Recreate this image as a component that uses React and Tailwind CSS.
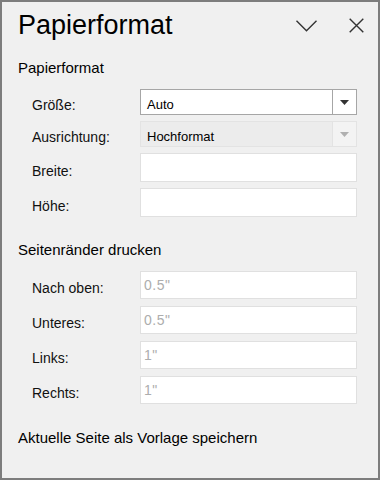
import React from "react";

const font = { fontFamily: '"Liberation Sans", Arial, sans-serif' };

function Label({ children }) {
  return (
    <div className="w-[122px] shrink-0 pl-[14px] pt-[6px] text-[14px] leading-[16px] text-[#111]">
      {children}
    </div>
  );
}

function Select({ value, disabled }) {
  return (
    <div
      className={`flex h-[26px] w-[217px] border ${
        disabled ? "border-[#e3e3e3] bg-[#ececec]" : "border-[#a6a6a6] bg-white"
      }`}
    >
      <div className="flex flex-1 items-center pl-[6px] pt-[5px] text-[13px] leading-[15px] text-black">
        {value}
      </div>
      <div
        className={`flex w-[24px] items-center justify-center border-l ${
          disabled ? "border-[#e3e3e3] bg-[#f3f3f3]" : "border-[#a6a6a6] bg-white"
        }`}
      >
        <svg width="9" height="5" viewBox="0 0 9 5">
          <path d="M0 0h9L4.5 5z" fill={disabled ? "#b0b0b0" : "#333"} />
        </svg>
      </div>
    </div>
  );
}

function Input({ placeholder, h = "h-[29px]" }) {
  return (
    <div
      className={`flex ${h} w-[217px] items-center border border-[#e0e0e0] bg-white pl-[3px] text-[14px] leading-[16px] tracking-[0.5px] text-[#adadad]`}
    >
      {placeholder}
    </div>
  );
}

function Row({ label, children, className = "" }) {
  return (
    <div className={`flex items-center ${className}`}>
      <Label>{label}</Label>
      {children}
    </div>
  );
}

export default function App() {
  return (
    <div
      className="flex h-[480px] w-[380px] flex-col border-2 border-[#7d7d7d] bg-[#f0f0f0] pl-[16px] pr-[21px] pt-[8px]"
      style={font}
    >
      <div className="flex h-[31px] items-center justify-between">
        <div className="text-[27px] leading-[31px] text-black">Papierformat</div>
        <div className="-mr-[7px] flex items-center gap-[32px]">
          <svg width="21" height="12" viewBox="0 0 21 12">
            <path d="M0.5 0.7L10.5 10.7L20.5 0.7" fill="none" stroke="#333" strokeWidth="1.4" />
          </svg>
          <svg width="15" height="15" viewBox="0 0 15 15">
            <path d="M0.7 0.7L14.3 14.3M14.3 0.7L0.7 14.3" fill="none" stroke="#333" strokeWidth="1.4" />
          </svg>
        </div>
      </div>

      <div className="mt-[18px] text-[15px] leading-[17px] text-black">Papierformat</div>

      <Row label="Größe:" className="mt-[13px]">
        <Select value="Auto" />
      </Row>
      <Row label="Ausrichtung:" className="mt-[6px]">
        <Select value="Hochformat" disabled />
      </Row>
      <Row label="Breite:" className="mt-[6px]">
        <Input />
      </Row>
      <Row label="Höhe:" className="mt-[6px]">
        <Input />
      </Row>

      <div className="mt-[24px] text-[15px] leading-[17px] text-black">Seitenränder drucken</div>

      <Row label="Nach oben:" className="mt-[13px]">
        <Input placeholder={'0.5"'} h="h-[28px]" />
      </Row>
      <Row label="Unteres:" className="mt-[7px]">
        <Input placeholder={'0.5"'} h="h-[28px]" />
      </Row>
      <Row label="Links:" className="mt-[7px]">
        <Input placeholder={'1"'} h="h-[28px]" />
      </Row>
      <Row label="Rechts:" className="mt-[7px]">
        <Input placeholder={'1"'} h="h-[28px]" />
      </Row>

      <div className="mt-[25px] text-[15px] leading-[17px] text-black">
        Aktuelle Seite als Vorlage speichern
      </div>
    </div>
  );
}
